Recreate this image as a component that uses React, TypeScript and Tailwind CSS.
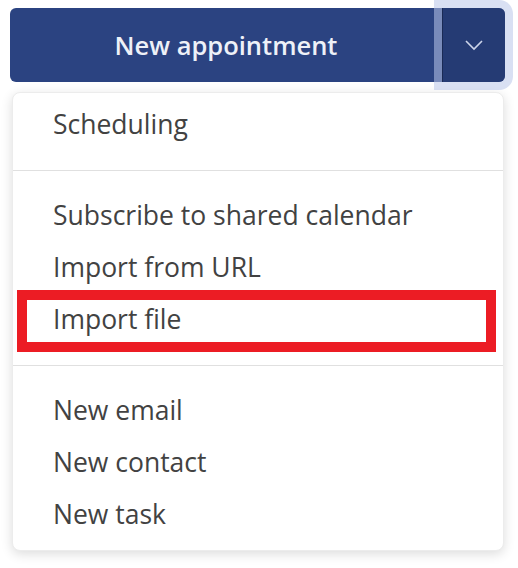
import React from "react"

const font = { fontFamily: "'Segoe UI', 'Open Sans', sans-serif" }

function MenuItem({ label, marked }: { label: string; marked?: boolean }) {
  return (
    <div className="relative flex h-[52px] items-center pl-10 text-[26.5px] text-[#424242]">
      {label}
      {marked && (
        <div className="absolute -top-1 -bottom-[6px] left-1 right-[7px] border-[10px] border-[#ec1c24]" />
      )}
    </div>
  )
}

function Divider() {
  return <div className="my-[19px] h-px bg-[#e0e0e0]" />
}

export default function App() {
  return (
    <div className="h-[568px] w-[518px] bg-white" style={font}>
      <div className="pt-2 pl-[10px]">
        <div className="flex h-[74px] w-[495px] rounded-md bg-[#2b4381]">
          <button className="flex flex-1 items-center justify-center text-[25.5px] font-semibold text-[#eef1f8]">
            New appointment
          </button>
          <button className="relative flex w-[63px] items-center justify-center rounded-r-md border-l border-[#1a2a55] bg-[#253b74] ring-8 ring-[#b9c7ea]/55">
            <svg width="20" height="12" viewBox="0 0 20 12" fill="none">
              <path d="M2 2l8 8 8-8" stroke="#cdd5ea" strokeWidth="1.6" />
            </svg>
          </button>
        </div>
      </div>
      <div className="mt-[10px] ml-3 w-[492px] rounded-lg border border-[#ececec] bg-white pt-[6px] pb-[9px] shadow-[0_3px_12px_rgba(0,0,0,0.14)]">
        <MenuItem label="Scheduling" />
        <Divider />
        <MenuItem label="Subscribe to shared calendar" />
        <MenuItem label="Import from URL" />
        <MenuItem label="Import file" marked />
        <Divider />
        <MenuItem label="New email" />
        <MenuItem label="New contact" />
        <MenuItem label="New task" />
      </div>
    </div>
  )
}
